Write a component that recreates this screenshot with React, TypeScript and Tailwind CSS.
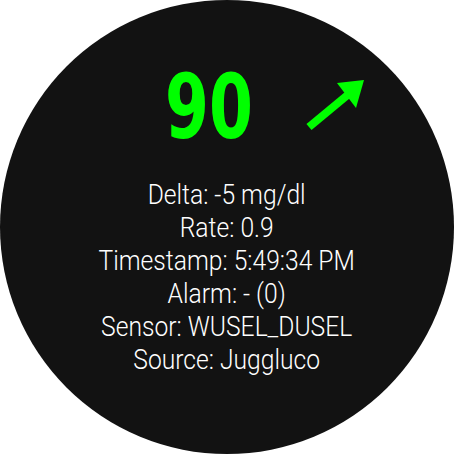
export default function App() {
  const lines = [
    'Delta: -5 mg/dl',
    'Rate: 0.9',
    'Timestamp: 5:49:34 PM',
    'Alarm: - (0)',
    'Sensor: WUSEL_DUSEL',
    'Source: Juggluco',
  ]

  return (
    <div className="w-[454px] h-[454px] bg-white">
      <div className="w-[454px] h-[454px] rounded-full bg-[#121212] flex flex-col items-center overflow-hidden">
        {/* Glucose value + trend arrow */}
        <div className="relative w-full h-[104px] mt-[55px] flex justify-center">
          <span
            className="block text-[#00ff00] font-bold text-[89px] leading-[104px] scale-x-[0.71] -translate-x-[18px]"
            style={{ fontFamily: '"DejaVu Sans", sans-serif' }}
          >
            90
          </span>
          <svg className="absolute left-[300px] top-[15px]" width="70" height="70" viewBox="0 0 70 70">
            <line x1="9" y1="57" x2="50" y2="23" stroke="#00ff00" strokeWidth="8" />
            <polygon points="37,13 64,10 56,38" fill="#00ff00" />
          </svg>
        </div>

        {/* Details */}
        <div
          className="mt-[19px] flex flex-col items-center text-white font-light text-[28px] leading-[33px] scale-x-[0.88] whitespace-nowrap"
          style={{ fontFamily: 'Roboto, sans-serif' }}
        >
          {lines.map((line) => (
            <div key={line}>{line}</div>
          ))}
        </div>
      </div>
    </div>
  )
}
